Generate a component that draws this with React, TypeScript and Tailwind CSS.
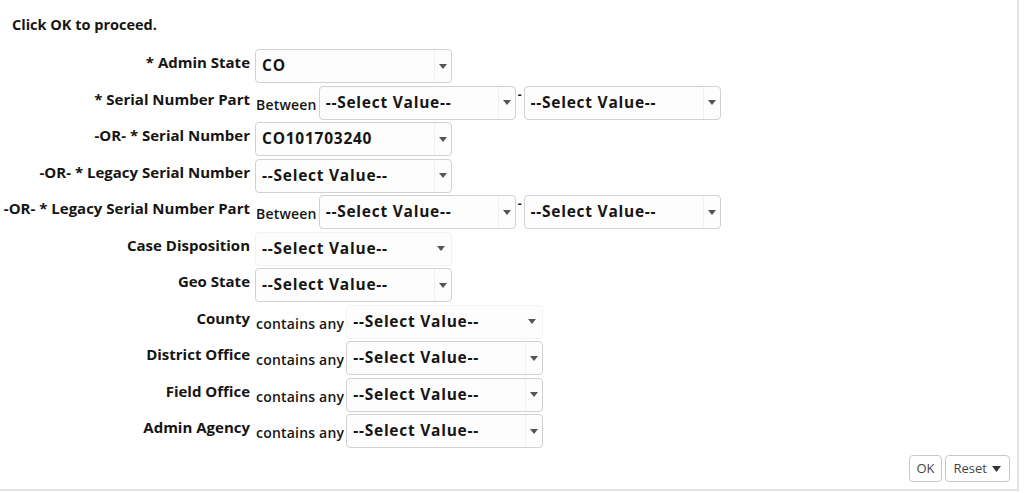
import React from "react";

const font = { fontFamily: '"Open Sans", "Noto Sans", Arial, sans-serif' };

function Arrow() {
  return (
    <svg width="8" height="5" viewBox="0 0 8 5" className="block">
      <path d="M0 0 L8 0 L4 5 Z" fill="#555" />
    </svg>
  );
}

function Select({ value, plain = false }: { value: string; plain?: boolean }) {
  if (plain) {
    return (
      <div className="flex h-[34px] w-[197px] items-center rounded-[4px] border border-[#f1f2f4] bg-[#fdfdfe] pl-[6px]">
        <span className="flex-1 truncate text-[15.5px] font-bold tracking-[0.75px] text-[#161513]">{value}</span>
        <div className="flex w-[18px] justify-center pr-[3px]">
          <Arrow />
        </div>
      </div>
    );
  }
  return (
    <div className="flex h-[34px] w-[197px] items-stretch rounded-[4px] border border-[#cfd1d5] bg-[#fdfdfe]">
      <div className="flex flex-1 items-center border-r border-[#f0f1f3] pl-[6px]">
        <span className="truncate text-[15.5px] font-bold tracking-[0.75px] text-[#161513]">{value}</span>
      </div>
      <div className="flex w-[16px] items-center justify-center">
        <Arrow />
      </div>
    </div>
  );
}

function Row({ label, children }: { label: string; children: React.ReactNode }) {
  return (
    <div className="flex h-[34px] items-center">
      <div className="mb-[7px] w-[250px] shrink-0 whitespace-nowrap text-right text-[15px] font-bold text-[#161513]">
        {label}
      </div>
      <div className="ml-[5px] flex items-center">{children}</div>
    </div>
  );
}

function Prefix({ text }: { text: string }) {
  return (
    <span className="ml-[1px] mr-[2px] mt-[3px] whitespace-nowrap text-[14px] font-semibold tracking-[0.2px] text-[#161513]">
      {text}
    </span>
  );
}

function Range() {
  return (
    <>
      <Prefix text="Between" />
      <Select value="--Select Value--" />
      <span className="mx-[2px] mb-[16px] text-[12px] font-bold leading-none text-[#161513]">-</span>
      <Select value="--Select Value--" />
    </>
  );
}

export default function App() {
  return (
    <div
      style={font}
      className="relative h-[491px] w-[1019px] border-b-2 border-r-2 border-[#e2e3e8] bg-white"
    >
      <div className="pl-3 pt-[15px] text-[14.5px] font-bold leading-5 text-[#161513]">
        Click OK to proceed.
      </div>
      <div className="mt-[14px] flex flex-col gap-[2.5px]">
        <Row label="* Admin State">
          <Select value="CO" />
        </Row>
        <Row label="* Serial Number Part">
          <Range />
        </Row>
        <Row label="-OR- * Serial Number">
          <Select value="CO101703240" />
        </Row>
        <Row label="-OR- * Legacy Serial Number">
          <Select value="--Select Value--" />
        </Row>
        <Row label="-OR- * Legacy Serial Number Part">
          <Range />
        </Row>
        <Row label="Case Disposition">
          <Select value="--Select Value--" plain />
        </Row>
        <Row label="Geo State">
          <Select value="--Select Value--" />
        </Row>
        <Row label="County">
          <Prefix text="contains any" />
          <Select value="--Select Value--" plain />
        </Row>
        <Row label="District Office">
          <Prefix text="contains any" />
          <Select value="--Select Value--" />
        </Row>
        <Row label="Field Office">
          <Prefix text="contains any" />
          <Select value="--Select Value--" />
        </Row>
        <Row label="Admin Agency">
          <Prefix text="contains any" />
          <Select value="--Select Value--" />
        </Row>
      </div>
      <div className="absolute bottom-[7px] right-[7px] flex gap-[3px]">
        <button className="h-[27px] rounded-[4px] border border-[#c8c8c8] bg-white px-[6px] text-[13px] text-[#444]">
          OK
        </button>
        <button className="flex h-[27px] items-center gap-[5px] rounded-[4px] border border-[#c8c8c8] bg-white px-[8px] text-[13px] text-[#444]">
          Reset
          <svg width="9" height="6" viewBox="0 0 9 6"><path d="M0 0 L9 0 L4.5 6 Z" fill="#333" /></svg>
        </button>
      </div>
    </div>
  );
}
